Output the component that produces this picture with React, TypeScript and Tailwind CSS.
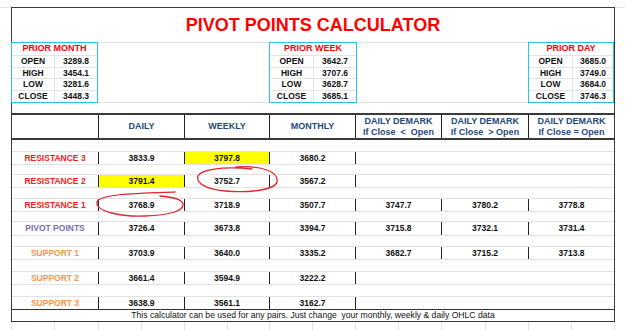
import clsx from "clsx";

type PriorProps = {
  title: string;
  data: [string, string][];
  box: string;
  label: string;
};

const rowHeights = ["h-[12px]", "h-[11px]", "h-[12px]", "h-[11px]"];

function PriorBox({ title, data, box, label }: PriorProps) {
  return (
    <div className={clsx("-my-px flex h-[61px] shrink-0 flex-col border border-[#29c1ef] bg-white", box)}>
      <div className="flex h-[13px] items-center justify-center border-b border-[#e3e3e3] text-[9px] font-bold text-[#ff0000]">
        {title}
      </div>
      {data.map(([k, v], i) => (
        <div
          key={k}
          className={clsx("flex text-[8.5px] font-bold text-[#111]", rowHeights[i], i < 3 && "border-b border-[#e3e3e3]")}
        >
          <div className={clsx("flex items-center justify-center border-r border-[#e3e3e3]", label)}>{k}</div>
          <div className="flex flex-1 items-center justify-center">{v}</div>
        </div>
      ))}
    </div>
  );
}

interface Row {
  label: string;
  color: string;
  gap: string;
  h: string;
  d: string;
  w: string;
  m: string;
  dm?: [string, string, string];
  hl?: "d" | "w";
  last?: boolean;
}

const rows: Row[] = [
  { label: "RESISTANCE 3", color: "text-[#ff1a1a]", gap: "h-[12px]", h: "h-[13px]", d: "3833.9", w: "3797.8", m: "3680.2", hl: "w" },
  { label: "RESISTANCE 2", color: "text-[#ff1a1a]", gap: "h-[10px]", h: "h-[13px]", d: "3791.4", w: "3752.7", m: "3567.2", hl: "d" },
  { label: "RESISTANCE 1", color: "text-[#ff1a1a]", gap: "h-[11px]", h: "h-[13px]", d: "3768.9", w: "3718.9", m: "3507.7", dm: ["3747.7", "3780.2", "3778.8"] },
  { label: "PIVOT POINTS", color: "text-[#7d6cb4]", gap: "h-[10px]", h: "h-[14px]", d: "3726.4", w: "3673.8", m: "3394.7", dm: ["3715.8", "3732.1", "3731.4"] },
  { label: "SUPPORT 1", color: "text-[#f7964a]", gap: "h-[11px]", h: "h-[13px]", d: "3703.9", w: "3640.0", m: "3335.2", dm: ["3682.7", "3715.2", "3713.8"] },
  { label: "SUPPORT 2", color: "text-[#f7964a]", gap: "h-[12px]", h: "h-[13px]", d: "3661.4", w: "3594.9", m: "3222.2" },
  { label: "SUPPORT 3", color: "text-[#f7964a]", gap: "h-[12px]", h: "h-[12px]", d: "3638.9", w: "3561.1", m: "3162.7", last: true },
];

const sheetCols = [
  "w-[43px]", "w-[44px]", "w-[43px]", "w-[43px]", "w-[43px]", "w-[42px]", "w-[43px]",
  "w-[43px]", "w-[43px]", "w-[43px]", "w-[44px]", "w-[43px]", "w-[43px]", "w-[43px]",
];

function Cell({ v, w, line, hl }: { v?: string; w: string; line?: boolean; hl?: boolean }) {
  return (
    <div
      className={clsx(
        "flex h-full shrink-0 items-center justify-center",
        w,
        line && "border-l border-[#222]",
        hl && "bg-[#ffff00]"
      )}
    >
      {v}
    </div>
  );
}

function HeadCell({ w, top, bottom }: { w: string; top: string; bottom?: string }) {
  return (
    <div className={clsx("flex h-full shrink-0 flex-col items-center justify-center border-l border-[#222] leading-[11px]", w)}>
      <span>{top}</span>
      {bottom && <span className="whitespace-pre">{bottom}</span>}
    </div>
  );
}

export default function App() {
  return (
    <div className="relative h-[330px] w-[625px] overflow-hidden bg-white font-['Liberation_Sans',Arial,sans-serif]">
      <div className="h-[8px] border-b border-[#e3e3e3]" />

      <div className="-mt-px ml-[11px] flex h-[315px] w-[604px] flex-col border border-[#3a3a3a]">
        <div className="flex h-[34px] items-center justify-center text-[18px] font-bold text-[#ff0000]">
          PIVOT POINTS CALCULATOR
        </div>

        <div className="flex h-[61px] border-y border-[#e3e3e3]">
          <PriorBox
            title="PRIOR MONTH"
            box="-ml-px w-[87px]"
            label="w-[43px]"
            data={[["OPEN", "3289.8"], ["HIGH", "3454.1"], ["LOW", "3281.6"], ["CLOSE", "3448.3"]]}
          />
          <div className="w-[171px] shrink-0" />
          <PriorBox
            title="PRIOR WEEK"
            box="w-[88px]"
            label="w-[44px]"
            data={[["OPEN", "3642.7"], ["HIGH", "3707.6"], ["LOW", "3628.7"], ["CLOSE", "3685.1"]]}
          />
          <div className="w-[171px] shrink-0" />
          <PriorBox
            title="PRIOR DAY"
            box="w-[86px]"
            label="w-[44px]"
            data={[["OPEN", "3685.0"], ["HIGH", "3749.0"], ["LOW", "3684.0"], ["CLOSE", "3746.3"]]}
          />
        </div>

        <div className="h-[10px]" />

        <div className="flex h-[27px] border-y-2 border-[#3a3a3a] text-[9px] font-bold text-[#1f497d]">
          <div className="w-[86px] shrink-0" />
          <HeadCell w="w-[86px]" top="DAILY" />
          <HeadCell w="w-[85px]" top="WEEKLY" />
          <HeadCell w="w-[86px]" top="MONTHLY" />
          <HeadCell w="w-[86px]" top="DAILY DEMARK" bottom="If Close  <  Open" />
          <HeadCell w="w-[87px]" top="DAILY DEMARK" bottom="If Close  > Open" />
          <HeadCell w="w-[86px]" top="DAILY DEMARK" bottom="If Close = Open" />
        </div>

        {rows.map((r) => (
          <div key={r.label}>
            <div className={clsx("border-b border-[#e3e3e3]", r.gap)} />
            <div
              className={clsx(
                "flex text-[8.5px] font-bold text-[#111]",
                r.h,
                !r.last && "border-b border-[#e3e3e3]"
              )}
            >
              <div className={clsx("flex h-full w-[86px] shrink-0 items-center justify-center", r.color)}>
                {r.label}
              </div>
              <Cell w="w-[86px]" v={r.d} line hl={r.hl === "d"} />
              <Cell w="w-[85px]" v={r.w} line hl={r.hl === "w"} />
              <Cell w="w-[86px]" v={r.m} line />
              <Cell w="w-[86px]" v={r.dm?.[0]} line />
              <Cell w="w-[87px]" v={r.dm?.[1]} line={!!r.dm} />
              <Cell w="w-[86px]" v={r.dm?.[2]} line={!!r.dm} />
            </div>
          </div>
        ))}

        <div className="flex h-[12px] items-center justify-center whitespace-pre border-t border-[#333] text-[8.6px] text-[#111]">
          This calculator can be used for any pairs. Just change  your monthly, weekly &amp; daily OHLC data
        </div>
      </div>

      <div className="ml-[11px] flex h-[9px] border-l border-[#e3e3e3]">
        {sheetCols.map((w, i) => (
          <div key={i} className={clsx("h-full shrink-0 border-r border-[#e3e3e3]", w)} />
        ))}
      </div>

      <svg className="pointer-events-none absolute inset-0" width="625" height="330" fill="none">
        <path
          d="M236 167 C262 165 279 172 277 182 C275 190 250 193 225 191 C205 189 196 183 198 176 C201 170 220 166 252 169"
          stroke="#e3262d"
          strokeWidth="1.3"
          strokeLinecap="round"
        />
        <path
          d="M175 192 C140 193 100 194 97 202 C95 211 120 217 145 216 C170 215 184 211 183 204 C182 199 172 197 160 196"
          stroke="#e3262d"
          strokeWidth="1.3"
          strokeLinecap="round"
        />
      </svg>
    </div>
  );
}
